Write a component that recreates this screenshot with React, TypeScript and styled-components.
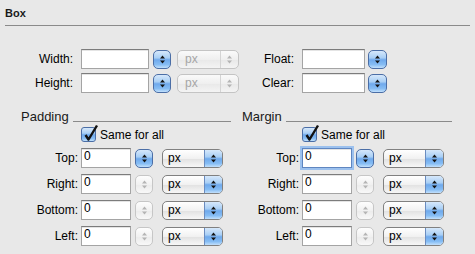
import React from 'react';
import styled, { createGlobalStyle, css } from 'styled-components';

const GlobalStyle = createGlobalStyle`
  html, body {
    margin: 0;
    padding: 0;
    background: #e8e8e8;
  }
  body {
    font-family: "Liberation Sans", Arial, sans-serif;
    font-size: 12px;
    color: #000;
  }
`;

const aquaBlue = css`
  background: linear-gradient(
    to bottom,
    #d6e8fb 0%,
    #a9cff5 40%,
    #6fa9ec 52%,
    #86bdf4 80%,
    #c2e0fc 100%
  );
`;

const Panel = styled.div`
  width: 475px;
  height: 254px;
  background: #e8e8e8;
  overflow: hidden;
`;

const Title = styled.div`
  padding: 6px 0 0 5px;
  font-size: 11px;
  font-weight: bold;
  line-height: 14px;
  color: #1a1a1a;
`;

const Divider = styled.div`
  margin: 5px 5px 0;
  height: 1px;
  background: #8a8a8a;
`;

const TopRows = styled.div`
  margin-top: 23px;
  display: flex;
  flex-direction: column;
  gap: 4px;
`;

const Row = styled.div`
  display: flex;
  align-items: center;
  height: 20px;
`;

const Label = styled.span<{ $w: number }>`
  width: ${({ $w }) => $w}px;
  flex-shrink: 0;
  text-align: right;
  line-height: 14px;
  white-space: nowrap;
`;

const TextField = styled.div<{ $w: number; $ml: number; $focused?: boolean }>`
  box-sizing: border-box;
  width: ${({ $w }) => $w}px;
  height: 20px;
  margin-left: ${({ $ml }) => $ml}px;
  padding: 0 2px;
  line-height: 14px;
  background: #fff;
  border: 1px solid #a4a4a4;
  border-top-color: #7c7c7c;
  box-shadow: inset 0 1px 0 #e4e4e4;
  ${({ $focused }) =>
    $focused &&
    css`
      border-color: #5f86c0;
      box-shadow: 0 0 0 2px #9cc1ee, inset 0 1px 0 #e4e4e4;
    `}
`;

const Stepper = styled.div<{ $w: number; $ml: number; $disabled?: boolean }>`
  box-sizing: border-box;
  width: ${({ $w }) => $w}px;
  height: 19px;
  margin-left: ${({ $ml }) => $ml}px;
  border-radius: 5px;
  display: flex;
  align-items: center;
  justify-content: center;
  ${({ $disabled }) =>
    $disabled
      ? css`
          border: 1px solid #c6c6c6;
          background: linear-gradient(to bottom, #fdfdfd, #f1f1f1 50%, #ebebeb 51%, #f8f8f8);
        `
      : css`
          border: 1px solid #4b6ea6;
          ${aquaBlue};
        `}
`;

const Popup = styled.div<{ $w: number; $ml: number; $disabled?: boolean }>`
  box-sizing: border-box;
  width: ${({ $w }) => $w}px;
  height: 19px;
  margin-left: ${({ $ml }) => $ml}px;
  border-radius: 5px;
  display: flex;
  overflow: hidden;
  border: 1px solid ${({ $disabled }) => ($disabled ? '#c4c4c4' : '#808080')};
  background: ${({ $disabled }) =>
    $disabled
      ? 'linear-gradient(to bottom, #fafafa, #efefef 50%, #e8e8e8 51%, #f4f4f4)'
      : 'linear-gradient(to bottom, #ffffff, #f1f1f1 50%, #e1e1e1 51%, #f7f7f7)'};
`;

const PopupText = styled.span<{ $disabled?: boolean; $pl: number }>`
  flex: 1;
  padding-left: ${({ $pl }) => $pl}px;
  line-height: 17px;
  color: ${({ $disabled }) => ($disabled ? '#a6a6a6' : '#000')};
`;

const PopupArrows = styled.span<{ $disabled?: boolean }>`
  width: 17px;
  display: flex;
  align-items: center;
  justify-content: center;
  ${({ $disabled }) =>
    $disabled
      ? css`
          border-left: 1px solid #d4d4d4;
        `
      : css`
          border-left: 1px solid #6a8cc0;
          ${aquaBlue};
        `}
`;

const Sections = styled.div`
  display: flex;
  gap: 11px;
  padding-left: 21px;
  margin-top: 16px;
`;

const Section = styled.div`
  width: 210px;
`;

const Heading = styled.div`
  display: flex;
  align-items: flex-end;
  height: 16px;
`;

const HeadingText = styled.span`
  font-size: 13px;
  line-height: 16px;
  color: #1a1a1a;
`;

const HeadingRule = styled.span`
  flex: 1;
  height: 1px;
  margin: 0 0 3px 4px;
  background: #8a8a8a;
`;

const CheckRow = styled.div`
  display: flex;
  align-items: center;
  gap: 4px;
  height: 15px;
  margin-top: 2px;
  padding-left: 60px;
`;

const CheckBox = styled.span`
  position: relative;
  box-sizing: border-box;
  width: 15px;
  height: 15px;
  border-radius: 3px;
  border: 1px solid #4b6ea6;
  ${aquaBlue};

  svg {
    position: absolute;
    left: 1px;
    top: -4px;
  }
`;

const FieldRows = styled.div`
  margin-top: 6px;
  display: flex;
  flex-direction: column;
  gap: 6px;
`;

const Arrows: React.FC<{ disabled?: boolean }> = ({ disabled }) => (
  <svg width="7" height="11" viewBox="0 0 7 11">
    <path d="M1 4.5 L3.5 1.5 L6 4.5 Z M1 6.5 L3.5 9.5 L6 6.5 Z" fill={disabled ? '#b4b4b4' : '#141414'} />
  </svg>
);

const Check = () => (
  <svg width="16" height="18" viewBox="0 0 16 18">
    <path d="M2.5 11 L5.5 15.5 L14 1.5" fill="none" stroke="#111" strokeWidth="2.4" strokeLinejoin="round" />
  </svg>
);

const BoxRow: React.FC<{ label: string; side: string }> = ({ label, side }) => (
  <Row>
    <Label $w={73}>{label}</Label>
    <TextField $w={68} $ml={8} />
    <Stepper $w={18} $ml={4}>
      <Arrows />
    </Stepper>
    <Popup $w={62} $ml={6} $disabled>
      <PopupText $pl={7} $disabled>px</PopupText>
      <PopupArrows $disabled>
        <Arrows disabled />
      </PopupArrows>
    </Popup>
    <Label $w={55}>{side}</Label>
    <TextField $w={63} $ml={8} />
    <Stepper $w={19} $ml={3}>
      <Arrows />
    </Stepper>
  </Row>
);

const SideRow: React.FC<{ label: string; active?: boolean; focused?: boolean }> = ({
  label,
  active,
  focused,
}) => (
  <Row>
    <Label $w={57}>{label}</Label>
    <TextField $w={50} $ml={3} $focused={focused}>
      0
    </TextField>
    <Stepper $w={18} $ml={4} $disabled={!active}>
      <Arrows disabled={!active} />
    </Stepper>
    <Popup $w={61} $ml={9}>
      <PopupText $pl={5}>px</PopupText>
      <PopupArrows>
        <Arrows />
      </PopupArrows>
    </Popup>
  </Row>
);

const SideSection: React.FC<{ title: string; focusTop?: boolean }> = ({ title, focusTop }) => (
  <Section>
    <Heading>
      <HeadingText>{title}</HeadingText>
      <HeadingRule />
    </Heading>
    <CheckRow>
      <CheckBox>
        <Check />
      </CheckBox>
      <span>Same for all</span>
    </CheckRow>
    <FieldRows>
      <SideRow label="Top:" active focused={focusTop} />
      <SideRow label="Right:" />
      <SideRow label="Bottom:" />
      <SideRow label="Left:" />
    </FieldRows>
  </Section>
);

export default function App() {
  return (
    <Panel>
      <GlobalStyle />
      <Title>Box</Title>
      <Divider />
      <TopRows>
        <BoxRow label="Width:" side="Float:" />
        <BoxRow label="Height:" side="Clear:" />
      </TopRows>
      <Sections>
        <SideSection title="Padding" />
        <SideSection title="Margin" focusTop />
      </Sections>
    </Panel>
  );
}
